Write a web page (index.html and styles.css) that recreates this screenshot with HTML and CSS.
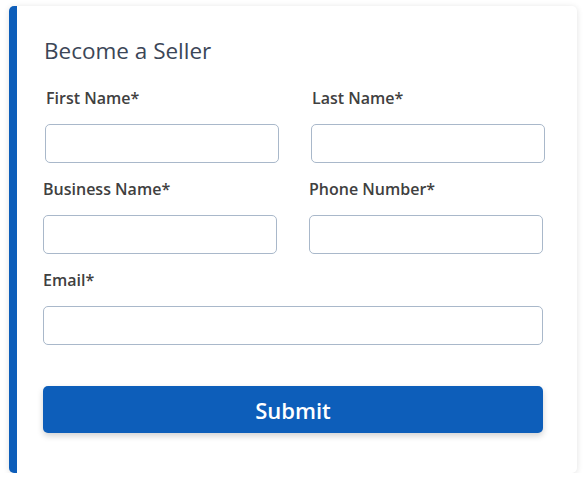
FILE: index.html
```html
<!DOCTYPE html>
<html lang="en">
<head>
<meta charset="utf-8">
<title>Become a Seller</title>
<link rel="stylesheet" href="styles.css">
</head>
<body>
<form class="card">
  <h2 class="title">Become a Seller</h2>
  <div class="row row-first">
    <div class="field">
      <label class="label">First Name*</label>
      <input class="input" type="text">
    </div>
    <div class="field">
      <label class="label">Last Name*</label>
      <input class="input" type="text">
    </div>
  </div>
  <div class="row">
    <div class="field">
      <label class="label">Business Name*</label>
      <input class="input" type="text">
    </div>
    <div class="field">
      <label class="label">Phone Number*</label>
      <input class="input" type="text">
    </div>
  </div>
  <div class="field">
    <label class="label">Email*</label>
    <input class="input" type="email">
  </div>
  <button class="submit" type="button">Submit</button>
</form>
</body>
</html>
```
FILE: styles.css
```css
* { box-sizing: border-box; }
html, body { margin: 0; padding: 0; background: #ffffff; }
body { padding: 6px 9px 0 9px; }
.card {
  width: 568px;
  height: 467px;
  background: #ffffff;
  border-left: 8px solid #0d5eba;
  border-radius: 5px;
  box-shadow: 0 1px 6px rgba(0, 0, 0, 0.12);
  padding: 31px 34px 0 26px;
  display: flex;
  flex-direction: column;
}
.title {
  margin: 0 0 23px 1px;
  font-family: "Open Sans", sans-serif;
  font-weight: 400;
  font-size: 22.5px;
  line-height: 28px;
  color: #3b4657;
}
.row {
  display: grid;
  grid-template-columns: 234px 234px;
  column-gap: 32px;
}
.row-first { margin-left: 2px; }
.field {
  display: flex;
  flex-direction: column;
  margin-bottom: 16px;
}
.label {
  font-family: "Open Sans", sans-serif;
  font-weight: 600;
  font-size: 16px;
  line-height: 20px;
  color: #404040;
  margin-bottom: 16px;
}
.row-first .label { margin-left: 1px; }
.input {
  height: 39px;
  width: 100%;
  border: 1px solid #a9b8ca;
  border-radius: 5px;
  background: #ffffff;
  font-family: "Open Sans", sans-serif;
  font-size: 16px;
  padding: 0 10px;
}
.submit {
  margin-top: 25px;
  height: 47px;
  width: 500px;
  border: none;
  border-radius: 5px;
  background: #0d5eba;
  color: #ffffff;
  font-family: "Open Sans", sans-serif;
  font-weight: 600;
  font-size: 22px;
  box-shadow: 0 3px 6px rgba(0, 0, 0, 0.18);
}
```
